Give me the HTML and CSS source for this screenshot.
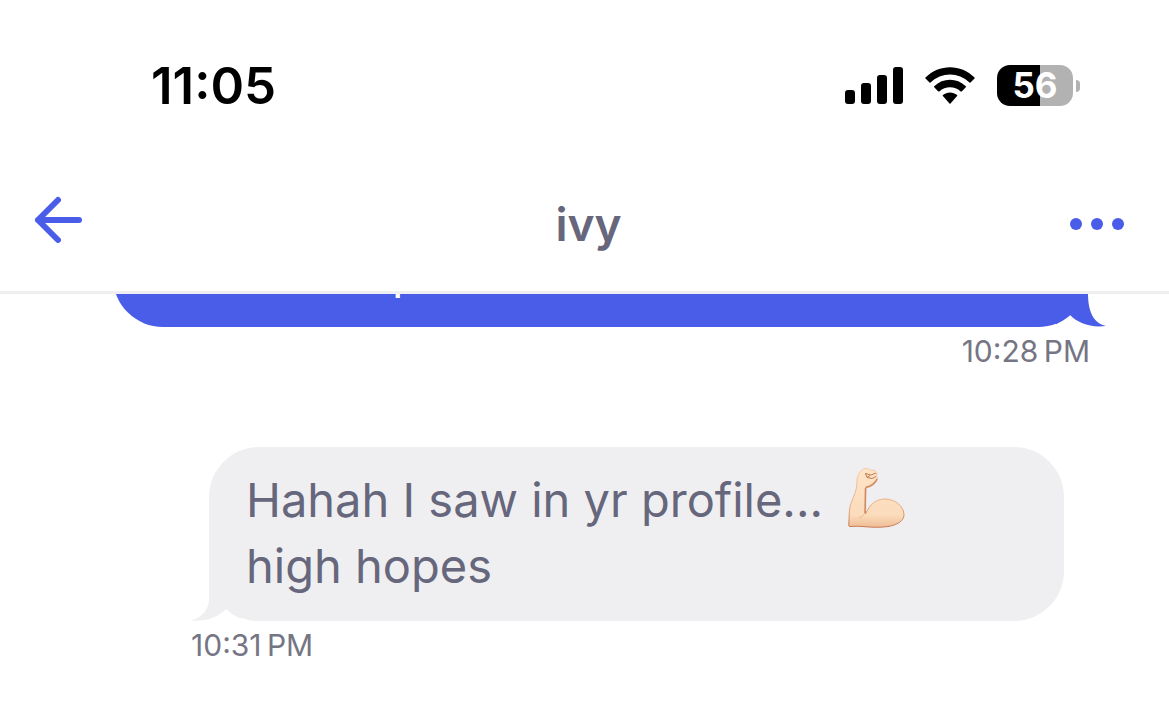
FILE: index.html
```html
<!DOCTYPE html>
<html lang="en">
<head>
<meta charset="utf-8">
<meta name="viewport" content="width=device-width, initial-scale=1">
<title>ivy</title>
<link rel="stylesheet" href="styles.css">
</head>
<body>
<div class="status-bar">
  <time class="clock">11:05</time>
  <div class="indicators">
    <svg class="signal" viewBox="0 0 58 38" aria-hidden="true">
      <rect x="0" y="23" width="10" height="14" rx="3"/>
      <rect x="16" y="16" width="10" height="21" rx="3"/>
      <rect x="32" y="8" width="10" height="29" rx="3"/>
      <rect x="48" y="0" width="10" height="37" rx="3"/>
    </svg>
    <svg class="wifi" viewBox="0 0 50 38" aria-hidden="true">
      <path d="M.5 10.6C14-3.2 36-3.2 49.500 10.600Q50 11.100 49.500 11.600L45.500 15.600Q45 16 44.500 15.600C33.500 4.800 16.500 4.800 5.500 15.600Q5 16 4.500 15.600L.5 11.600Q0 11.100.5 10.600Z"/>
      <path d="M9.200 19.300C18 10.700 32 10.700 40.800 19.300Q41.300 19.800 40.800 20.300L36.700 24.400Q36.200 24.800 35.700 24.400C29.600 18.900 20.400 18.900 14.300 24.400Q13.800 24.800 13.300 24.400L9.200 20.300Q8.700 19.800 9.200 19.300Z"/>
      <path d="M17.900 28C22 24.500 28 24.500 32.100 28Q32.600 28.500 32.100 29L25.500 36.500Q25 37 24.500 36.500L17.900 29Q17.400 28.500 17.900 28Z"/>
    </svg>
    <div class="battery"><span class="level">56</span><span class="battery-tip"></span></div>
  </div>
</div>
<header class="chat-header">
  <button class="icon-button back" type="button" aria-label="Back">
    <svg class="arrow" viewBox="0 0 48 48" aria-hidden="true"><path d="M24 4L4 24L24 44M4 24H45"/></svg>
  </button>
  <h1 class="name">ivy</h1>
  <button class="icon-button more" type="button" aria-label="More options">
    <svg class="dots" viewBox="0 0 54 12" aria-hidden="true"><circle cx="6" cy="6" r="6"/><circle cx="27" cy="6" r="6"/><circle cx="48" cy="6" r="6"/></svg>
  </button>
</header>
<main class="thread">
  <article class="message sent">
    <div class="bubble"><p class="text">p</p>
      <svg class="tail" viewBox="0 0 50 50" aria-hidden="true"><path class="gap" d="M14 50V32L32 38L50 49V50Z"/><path class="body" d="M-2 0H32V16C32 34 37 46 50 49C34 51 22 46 14 38C7 44-1 49-10 50V0Z"/></svg>
    </div>
    <time class="stamp">10:28&#8201;PM</time>
  </article>
  <article class="message received">
    <div class="bubble"><p class="text">Hahah I saw in yr profile... <svg class="emoji" viewBox="0 0 60 62" role="img" aria-label="Flexed biceps">
        <defs>
          <linearGradient id="skin" gradientUnits="userSpaceOnUse" x1="0" y1="0" x2="0" y2="60"><stop offset="0" stop-color="#ffe4c7"/><stop offset=".8" stop-color="#fbdcbc"/><stop offset="1" stop-color="#efbd96"/></linearGradient>
          <linearGradient id="edge" gradientUnits="userSpaceOnUse" x1="0" y1="0" x2="0" y2="60"><stop offset="0" stop-color="#f0cba8"/><stop offset=".6" stop-color="#e6b088"/><stop offset="1" stop-color="#c97850"/></linearGradient>
        </defs>
        <path d="M11.500 7.500C13 4 16 1.500 19 1.500C21 1.500 22 2.500 23.500 3C27 3 30 4 30 6.500L29.500 9L30.500 11C30 15 27 18 22.500 20L19 21L18.500 47C23 37 29 32 38 32C49 32 57 40 57 48C57 54 50 58 41 59.500C32 61 22 60 11 59.200L3 59.500Q1.500 59.500 1.700 57.500C2.500 51 1.500 42 4.500 35C7 28 10 23 10 16C10 12 10 10 11.500 7.500Z" fill="url(#skin)" stroke="url(#edge)"/>
        <path d="M30 12C28 17 24 19 18.500 20.500" fill="none" stroke="#cf875b" stroke-width="1.500"/>
        <path d="M18.500 21L18 46" fill="none" stroke="#d18a60" stroke-width="1.500"/>
        <path d="M18 46Q16 50 12 51" fill="none" stroke="#e0a47c" stroke-opacity=".6"/>
        <path d="M18 6.500L24 8L29 6M18.500 6.500L20 10.500L25 11.500L29 9.500M20 10.500L23 8.500" fill="none" stroke="#c07a50"/>
      </svg><br>high hopes</p>
      <svg class="tail" viewBox="0 0 50 50" aria-hidden="true"><path class="gap" d="M36 50V32L18 38L0 49V50Z"/><path class="body" d="M52 0H18V28C18 39 10 47 0 49.500C15 51 27 46 35 38C42 45 51 49 60 50V0Z"/></svg>
    </div>
    <time class="stamp">10:31&#8201;PM</time>
  </article>
</main>
</body>
</html>
```
FILE: styles.css
```css
* { box-sizing: border-box; }
body {
  display: flex;
  flex-direction: column;
  min-height: 100vh;
  margin: 0;
  background: #fff;
  color: #66667c;
  font-family: Inter, "Liberation Sans", sans-serif;
}
.status-bar {
  display: flex;
  align-items: flex-start;
  justify-content: space-between;
  padding: 56px 89px 0 151px;
}
.clock {
  color: #000;
  font-size: 51px;
  font-weight: 600;
  line-height: 60px;
}
.indicators { display: flex; align-items: center; gap: 22px; padding-top: 9px; }
.signal { width: 58px; height: 38px; }
.wifi { width: 50px; height: 38px; }
.battery { display: flex; align-items: center; gap: 3px; }
.level {
  width: 76px;
  border-radius: 13px;
  background: linear-gradient(90deg, #000 56%, #b2b2b2 56%);
  color: #fff;
  font-size: 35px;
  font-weight: 700;
  line-height: 41px;
  text-align: center;
}
.battery-tip {
  width: 4px;
  height: 12px;
  border-radius: 0 6px 6px 0;
  background: #b2b2b2;
}
.chat-header {
  display: grid;
  grid-template-columns: 1fr auto 1fr;
  align-items: center;
  height: 178px;
  padding: 64px 26px 20px 34px;
  border-bottom: 3px solid #efeff1;
}
.icon-button {
  display: flex;
  border: 0;
  background: none;
  color: #495de8;
}
.back { justify-self: start; margin-bottom: 12px; padding: 0; }
.more { justify-self: end; margin-bottom: 4px; padding: 6px 19px; }
.arrow {
  width: 48px;
  height: 48px;
  fill: none;
  stroke: currentColor;
  stroke-width: 6px;
  stroke-linecap: round;
  stroke-linejoin: round;
}
.dots { width: 54px; height: 12px; fill: currentColor; }
.name {
  margin: 0 0 4px;
  font-size: 46px;
  font-weight: 600;
  line-height: 60px;
}
.thread {
  display: flex;
  flex: 1;
  flex-direction: column;
  gap: 77px;
  overflow: hidden;
}
.message { display: flex; flex-direction: column; }
.sent {
  --bubble: #495de8;
  align-items: flex-end;
  margin: -75px 81px 0 113px;
  color: #fff;
}
.received {
  --bubble: #efeff1;
  align-items: flex-start;
  margin: 0 105px 0 191px;
}
.bubble {
  position: relative;
  align-self: stretch;
  padding: 20px 37px 22px;
  border-radius: 50px;
  background: var(--bubble);
}
.received .bubble { margin-left: 18px; }
.text { margin: 0; font-size: 47px; line-height: 66px; }
.sent .text { padding-left: 242px; }
.tail {
  position: absolute;
  bottom: 0;
  width: 50px;
  height: 50px;
}
.sent .tail { right: -18px; }
.received .tail { left: -18px; }
.gap { fill: #fff; }
.body { fill: var(--bubble); }
.emoji { width: 60px; height: 62px; margin-left: 11px; vertical-align: -12px; }
.stamp {
  padding-top: 6px;
  color: #757584;
  font-size: 30px;
  line-height: 37px;
}
.sent .stamp { margin-right: -2px; }
```
